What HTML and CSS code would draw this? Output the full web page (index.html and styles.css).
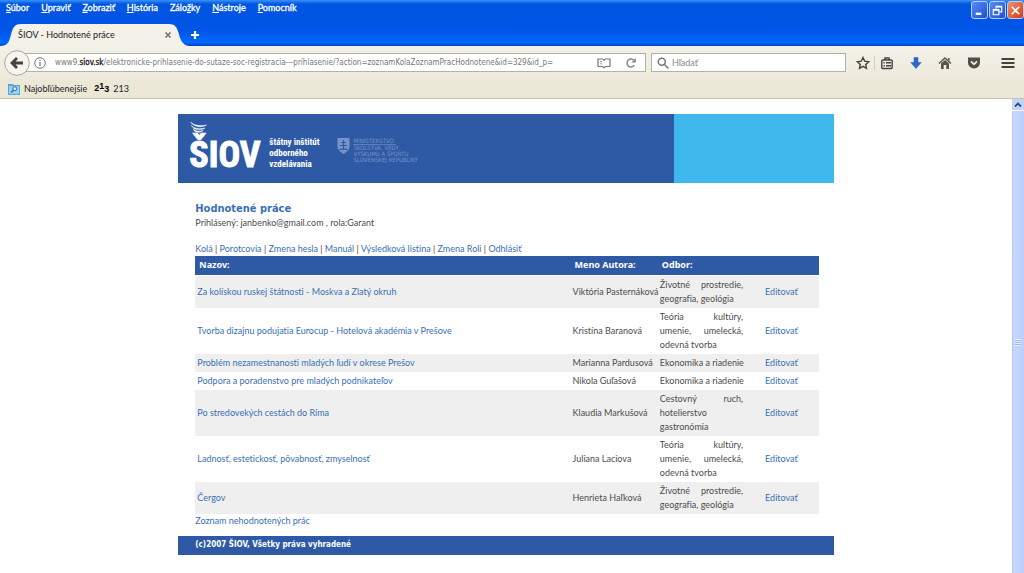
FILE: index.html
```
<!DOCTYPE html>
<html lang="sk">
<head>
<meta charset="utf-8">
<title>ŠIOV - Hodnotené práce</title>
<link rel="stylesheet" href="styles.css">
</head>
<body>
<div class="window">
  <header class="titlebar">
    <div class="menu-row">
      <nav class="menubar">
        <button type="button"><u>S</u>úbor</button>
        <button type="button"><u>U</u>praviť</button>
        <button type="button"><u>Z</u>obraziť</button>
        <button type="button"><u>H</u>istória</button>
        <button type="button">Zálo<u>ž</u>ky</button>
        <button type="button"><u>N</u>ástroje</button>
        <button type="button"><u>P</u>omocník</button>
      </nav>
      <div class="controls">
        <button type="button" aria-label="Minimalizovať"><svg viewBox="0 0 16 16"><path d="M4 11.500h6" stroke="#fff" stroke-width="2.500"/></svg></button>
        <button type="button" aria-label="Obnoviť"><svg viewBox="0 0 16 16" fill="none" stroke="#fff" stroke-width="1.200"><path d="M6.500 6V3.500h6v6H10M6 4.200h7M3.500 7h6v5.500h-6zM3.500 7.700h6"/></svg></button>
        <button type="button" class="close" aria-label="Zavrieť"><svg viewBox="0 0 16 16"><path d="M4 4l8 8M12 4l-8 8" stroke="#fff" stroke-width="1.800"/></svg></button>
      </div>
    </div>
    <div class="tabs">
      <div class="tab">
        <svg class="tab-shape" viewBox="0 0 190 23" preserveAspectRatio="none"><path d="M0 23C8 23 9 19 11 11C13 3 15 0 21 0H169C175 0 177 3 179 11C181 19 184 23 190 23Z" fill="#f3f1e8"/></svg>
        <span>ŠIOV - Hodnotené práce</span>
        <button type="button" aria-label="Zavrieť kartu"><svg viewBox="0 0 8 8"><path d="M1.500 1.500l5 5M6.500 1.500l-5 5" stroke="#777" stroke-width="1.700"/></svg></button>
      </div>
      <button type="button" class="new-tab" aria-label="Nová karta"><svg viewBox="0 0 10 10"><path d="M5 1v8M1 5h8" stroke="#fff" stroke-width="2.200"/></svg></button>
    </div>
  </header>

  <div class="navbar">
    <div class="address">
      <button type="button" class="back" aria-label="Späť"><svg viewBox="0 0 26 26"><circle cx="13" cy="13" r="12.300" fill="#f6f4ec" stroke="#aaa89d"/><path d="M19 13H9M13 8l-5 5 5 5" fill="none" stroke="#44433e" stroke-width="2.800"/></svg></button>
      <div class="urlbox">
        <svg class="ic12" viewBox="0 0 12 12" fill="none" stroke="#777"><circle cx="6" cy="6" r="5.300"/><path d="M6 5v4M6 2.700v1.300" stroke-width="1.200"/></svg>
        <div class="url">www9.<b>siov.sk</b>/elektronicke-prihlasenie-do-sutaze-soc-registracia---prihlasenie/?action=zoznamKolaZoznamPracHodnotene&amp;id=329&amp;id_p=</div>
        <svg class="ic14" viewBox="0 0 14 12" fill="none" stroke="#76767c" stroke-width="1.200"><path d="M1 2h4.500L7 3.200 8.500 2H13v7.500H8.500L7 10.700 5.500 9.500H1z"/><path d="M3 4.500h2M3 6.800h2" stroke-width=".8"/></svg>
        <svg class="ic12 reload" viewBox="0 0 12 12"><path d="M9.300 8.300A4 4 0 1 1 9 3.300" fill="none" stroke="#86868c" stroke-width="1.500"/><path d="M10.800 1v4.500H6.300z" fill="#86868c"/></svg>
      </div>
    </div>
    <label class="search">
      <svg class="ic12" viewBox="0 0 12 12" fill="none" stroke="#777" stroke-width="1.500"><circle cx="4.800" cy="4.800" r="3.500"/><path d="M7.500 7.500l4 4"/></svg>
      <input type="text" placeholder="Hľadať" aria-label="Hľadať">
    </label>
    <div class="tools">
      <button type="button" aria-label="Záložka"><svg viewBox="0 0 14 14"><path d="M7 1.500l1.700 3.700 4 .5-3 2.700.8 4L7 10.400 3.500 12.400l.8-4-3-2.700 4-.5z" fill="none" stroke="#44433e" stroke-width="1.400"/></svg></button>
      <button type="button" aria-label="Zoznam záložiek"><svg viewBox="0 0 14 14" fill="none" stroke="#44433e" stroke-width="1.400"><rect x="1.800" y="4" width="10.400" height="8.500" rx="1"/><path d="M5 4V2h4v2M3.500 6.700h1.300M6 6.700h5M3.500 9.700h1.300M6 9.700h5"/></svg></button>
      <button type="button" aria-label="Prevzaté súbory"><svg viewBox="0 0 14 14"><path d="M5 1.500h4v5h3.200L7 12.500 1.800 6.500H5z" fill="#2e68d0" stroke="#2455b0" stroke-width=".5"/></svg></button>
      <button type="button" aria-label="Domov"><svg viewBox="0 0 14 14"><path d="M1 7.500l6-5.500 6 5.500" fill="none" stroke="#55534b" stroke-width="1.500"/><path d="M3 7.500L7 4l4 3.500V13H8.300V9H5.700v4H3zM10 2h1.500v3L10 3.700z" fill="#55534b"/></svg></button>
      <button type="button" aria-label="Pocket"><svg viewBox="0 0 14 14"><path d="M1 1.500h12v5a6 6 0 0 1-12 0z" fill="#504f48"/><path d="M4 5.300l3 3 3-3" fill="none" stroke="#f3f1e8" stroke-width="1.700"/></svg></button>
      <button type="button" class="burger" aria-label="Ponuka"><svg viewBox="0 0 14 14"><path d="M.5 3h13M.5 7h13M.5 11h13" stroke="#44433e" stroke-width="2"/></svg></button>
    </div>
  </div>

  <div class="bookmarks">
    <a href="#"><svg class="ic12" viewBox="0 0 12 12"><path d="M0 1h5l1 1h6v10H0z" fill="#57a5d8"/><path d="M1 3h10v8H1z" fill="#9bd0f0"/><circle cx="6.800" cy="5.700" r="2" fill="#d9effb" stroke="#276fa6"/><path d="M5.500 7L3 9.500" stroke="#276fa6" stroke-width="1.300"/></svg>Najobľúbenejšie</a>
    <a href="#"><span class="favicon" aria-hidden="true"><b>2</b><b class="up">1</b><b class="down">3</b></span>213</a>
  </div>

  <div class="viewport">
    <main class="page">
      <div class="banner">
        <div class="banner-main">
          <div class="logo">
            <svg class="wing" viewBox="0 0 20 14"><path d="M0 0c4 4 11 5 19 3.500C13 7 4 6 0 0zM1 4c4 4 9 4.500 16 3C12 10 4 9.500 1 4zM3 8c3 3 7 3.200 12 2C11 13 5 13 3 8z" fill="#fff" stroke="#fff" stroke-width=".5"/></svg>
            <strong>ŠIOV</strong>
          </div>
          <p class="institute">štátny inštitút<br>odborného<br>vzdelávania</p>
          <svg class="shield" viewBox="0 0 13 16"><path d="M.5 0h12v9c0 3-3 5-6 7-3-2-6-4-6-7z" fill="#7893c6"/><path d="M6.500 2v10M4 4.500h5M3 7.500h7M2.500 12c2-2 2.500 0 4-1 1.500 1 2-1 4 1" fill="none" stroke="#2e5aa5" stroke-width="1.200"/></svg>
          <p class="ministry"><span>MINISTERSTVO</span>ŠKOLSTVA, VEDY,<br>VÝSKUMU A ŠPORTU<br>SLOVENSKEJ REPUBLIKY</p>
        </div>
        <div class="banner-side"></div>
      </div>

      <section class="content">
        <h1>Hodnotené práce</h1>
        <p class="user">Prihlásený: janbenko@gmail.com , rola:Garant</p>
        <nav class="links"><a href="#">Kolá</a> | <a href="#">Porotcovia</a> | <a href="#">Zmena hesla</a> | <a href="#">Manuál</a> | <a href="#">Výsledková listina</a> | <a href="#">Zmena Roli</a> | <a href="#">Odhlásiť</a></nav>
        <table>
          <colgroup><col class="c-name"><col class="c-author"><col class="c-field"><col></colgroup>
          <thead><tr><th>Nazov:</th><th>Meno Autora:</th><th>Odbor:</th><th></th></tr></thead>
          <tbody>
            <tr><td><a href="#">Za kolískou ruskej štátnosti - Moskva a Zlatý okruh</a></td><td>Viktória Pasternáková</td><td>Životné prostredie, geografia, geológia</td><td><a href="#">Editovať</a></td></tr>
            <tr><td><a href="#">Tvorba dizajnu podujatia Eurocup - Hotelová akadémia v Prešove</a></td><td>Kristína Baranová</td><td>Teória kultúry, umenie, umelecká, odevná tvorba</td><td><a href="#">Editovať</a></td></tr>
            <tr><td><a href="#">Problém nezamestnanosti mladých ľudí v okrese Prešov</a></td><td>Marianna Pardusová</td><td class="single">Ekonomika a riadenie</td><td><a href="#">Editovať</a></td></tr>
            <tr><td><a href="#">Podpora a poradenstvo pre mladých podnikateľov</a></td><td>Nikola Guľašová</td><td class="single">Ekonomika a riadenie</td><td><a href="#">Editovať</a></td></tr>
            <tr><td><a href="#">Po stredovekých cestách do Ríma</a></td><td>Klaudia Markušová</td><td>Cestovný ruch, hotelierstvo gastronómia</td><td><a href="#">Editovať</a></td></tr>
            <tr><td><a href="#">Ladnosť, estetickosť, pôvabnosť, zmyselnosť</a></td><td>Juliana Laciova</td><td>Teória kultúry, umenie, umelecká, odevná tvorba</td><td><a href="#">Editovať</a></td></tr>
            <tr><td><a href="#">Čergov</a></td><td>Henrieta Haľková</td><td>Životné prostredie, geografia, geológia</td><td><a href="#">Editovať</a></td></tr>
          </tbody>
        </table>
        <a class="more" href="#">Zoznam nehodnotených prác</a>
      </section>
      <footer>(c)2007 ŠIOV, Všetky práva vyhradené</footer>
    </main>
    <div class="scrollbar" aria-hidden="true">
      <div class="arrow"><svg viewBox="0 0 8 8"><path d="M1 5.500l3-3 3 3" fill="none" stroke="#33497c" stroke-width="1.800"/></svg></div>
      <div class="thumb"><i></i></div>
    </div>
  </div>
</div>
</body>
</html>
```
FILE: styles.css
```
* { box-sizing: border-box; }
body { margin: 0; background: #fff; font: 9px/14px Lato, sans-serif; font-variant-ligatures: none; color: #4c4c4c; }
button { padding: 0; border: 0; background: none; color: inherit; font: inherit; }
svg { display: block; flex: none; }
a { color: #3a6fb5; text-decoration: none; }
p, h1 { margin: 0; }
.window { display: flex; flex-direction: column; min-height: 100vh; }
.ic12 { width: 12px; height: 12px; }
.ic14 { width: 14px; height: 12px; }

.titlebar { background: linear-gradient(#3a92fa 0, #0055e0 4px, #0054e8 65%, #0369fc 93%, #003fc8 100%); }
.menu-row { display: flex; justify-content: space-between; height: 24px; }
.menubar { display: flex; gap: 12px; padding: 1px 0 0 6px; align-items: flex-start; color: #fff; -webkit-text-stroke: 0.3px #fff; }
.controls { display: flex; gap: 1px; padding: 1px 0 0; align-items: flex-start; }
.controls button { width: 17px; height: 18px; border: 1px solid #b9cdf8; border-radius: 3px; background: linear-gradient(135deg, #5c8bf2, #1c4fd2); }
.controls .close { background: linear-gradient(135deg, #f09070, #d43c10); }
.tabs { display: flex; align-items: center; height: 22px; }
.tab { position: relative; display: flex; align-items: center; justify-content: space-between; width: 190px; height: 22px; padding: 0 18px; color: #222; }
.tab-shape { position: absolute; left: 0; top: 0; width: 100%; height: 100%; }
.tab span, .tab button { position: relative; }
.tab button svg { width: 8px; height: 8px; }
.new-tab svg { width: 10px; height: 10px; }

.navbar { display: flex; align-items: center; height: 33px; padding: 0 9px 0 4px; background: linear-gradient(#f3f1e8, #edeadc); }
.address { display: flex; align-items: center; flex: 1; min-width: 0; }
.back { z-index: 1; }
.back svg { width: 26px; height: 26px; }
.urlbox { display: flex; align-items: center; flex: 1; min-width: 0; height: 19px; margin-left: -5px; padding: 0 8px; border: 1px solid #b4b2a6; background: #fff; }
.url { flex: 1; min-width: 0; margin: 0 16px 0 9px; overflow: hidden; white-space: nowrap; color: #777; font: 8px/14px "DejaVu Sans Condensed", sans-serif; }
.url b { color: #222; font-weight: normal; -webkit-text-stroke: 0.3px #222; }
.reload { margin-left: 14px; }
.search { display: flex; align-items: center; gap: 3px; width: 19.300%; height: 19px; margin-left: 5px; padding: 0 5px; border: 1px solid #b4b2a6; background: #fff; }
.search input { flex: 1; min-width: 0; padding: 0; border: 0; outline: 0; background: none; font: inherit; }
.search input::placeholder { color: #888; opacity: 1; }
.tools { display: flex; align-items: center; gap: 15px; margin-left: 10px; }
.tools svg { width: 14px; height: 14px; }
.tools button:first-child { padding-right: 4px; margin-right: -10px; border-right: 1px solid #d2d0c4; }
.burger { padding-left: 5px; }

.bookmarks { display: flex; align-items: center; gap: 7px; height: 20px; padding: 0 8px; border-bottom: 1px solid #c5c2b2; background: #ebe8d8; }
.bookmarks a { display: flex; align-items: center; gap: 4px; color: #222; }
.favicon { display: flex; color: #000; font: bold 9px/12px "Liberation Sans", sans-serif; }
.favicon .up { line-height: 8px; }
.favicon .down { line-height: 14px; }

.viewport { display: flex; flex: 1; }
.page { width: 64%; margin: 15px auto 0; }
.banner { display: flex; height: 69px; }
.banner-main { display: flex; width: 75.600%; padding-left: 11px; background: #2e5aa5; color: #fff; }
.banner-side { flex: 1; background: #3eb8ed; }
.logo { width: 80px; padding-top: 8px; }
.wing { width: 20px; height: 12px; }
.logo strong { display: block; font: bold 36px/42px "Liberation Sans Narrow", "Roboto Condensed", sans-serif; -webkit-text-stroke: 1px #fff; }
.institute { padding-top: 23px; font: bold 9px/11px "Liberation Sans Narrow", "Roboto Condensed", sans-serif; }
.shield { width: 13px; height: 16px; margin: 24px 3px 0 18px; }
.ministry { padding-top: 24px; color: #7893c6; font: 6px/6px "Liberation Sans Narrow", "DejaVu Sans Condensed", sans-serif; }
.ministry span { display: table; padding-right: 2px; border-bottom: 1px solid #5f7db8; }

.content { padding: 19px 15px 0 17px; }
h1 { color: #3a70b4; font: bold 11px/14px "DejaVu Sans Condensed", "Noto Sans", sans-serif; }
.links { margin-top: 12px; color: #703020; }
table { width: 100%; border-collapse: collapse; table-layout: fixed; }
.c-name { width: 60.200%; }
.c-author, .c-field { width: 14%; }
th { height: 19px; padding: 0 4px; border-bottom: 1px solid #fff; background: #2e5aa5; color: #fff; font: bold 9px/14px "Noto Sans", sans-serif; text-align: left; }
td { padding: 2px; vertical-align: middle; }
td:nth-child(2) { white-space: nowrap; }
td:nth-child(3) { text-align: justify; }
td.single { white-space: nowrap; }
td:last-child { padding-left: 20px; }
tbody tr:nth-child(odd) { background: #efefef; }
.more { display: block; }
footer { margin-top: 8px; padding: 2px 17px 3px; background: #2e5aa5; color: #fff; font: bold 8px/14px "DejaVu Sans Condensed", sans-serif; }

.scrollbar { display: flex; flex-direction: column; width: 12px; background: #dfe8fc; }
.arrow { display: flex; align-items: center; justify-content: center; height: 12px; border-bottom: 1px solid #fff; background: #c3d4fb; }
.arrow svg { width: 8px; height: 8px; }
.thumb { display: flex; align-items: center; justify-content: center; flex: 1; border-left: 1px solid #b3c6f4; background: linear-gradient(90deg, #c8d8fd, #bccffa); }
.thumb i { width: 6px; height: 7px; background: repeating-linear-gradient(#e8effe 0 1px, #9fb8ee 1px 2px); }
```
